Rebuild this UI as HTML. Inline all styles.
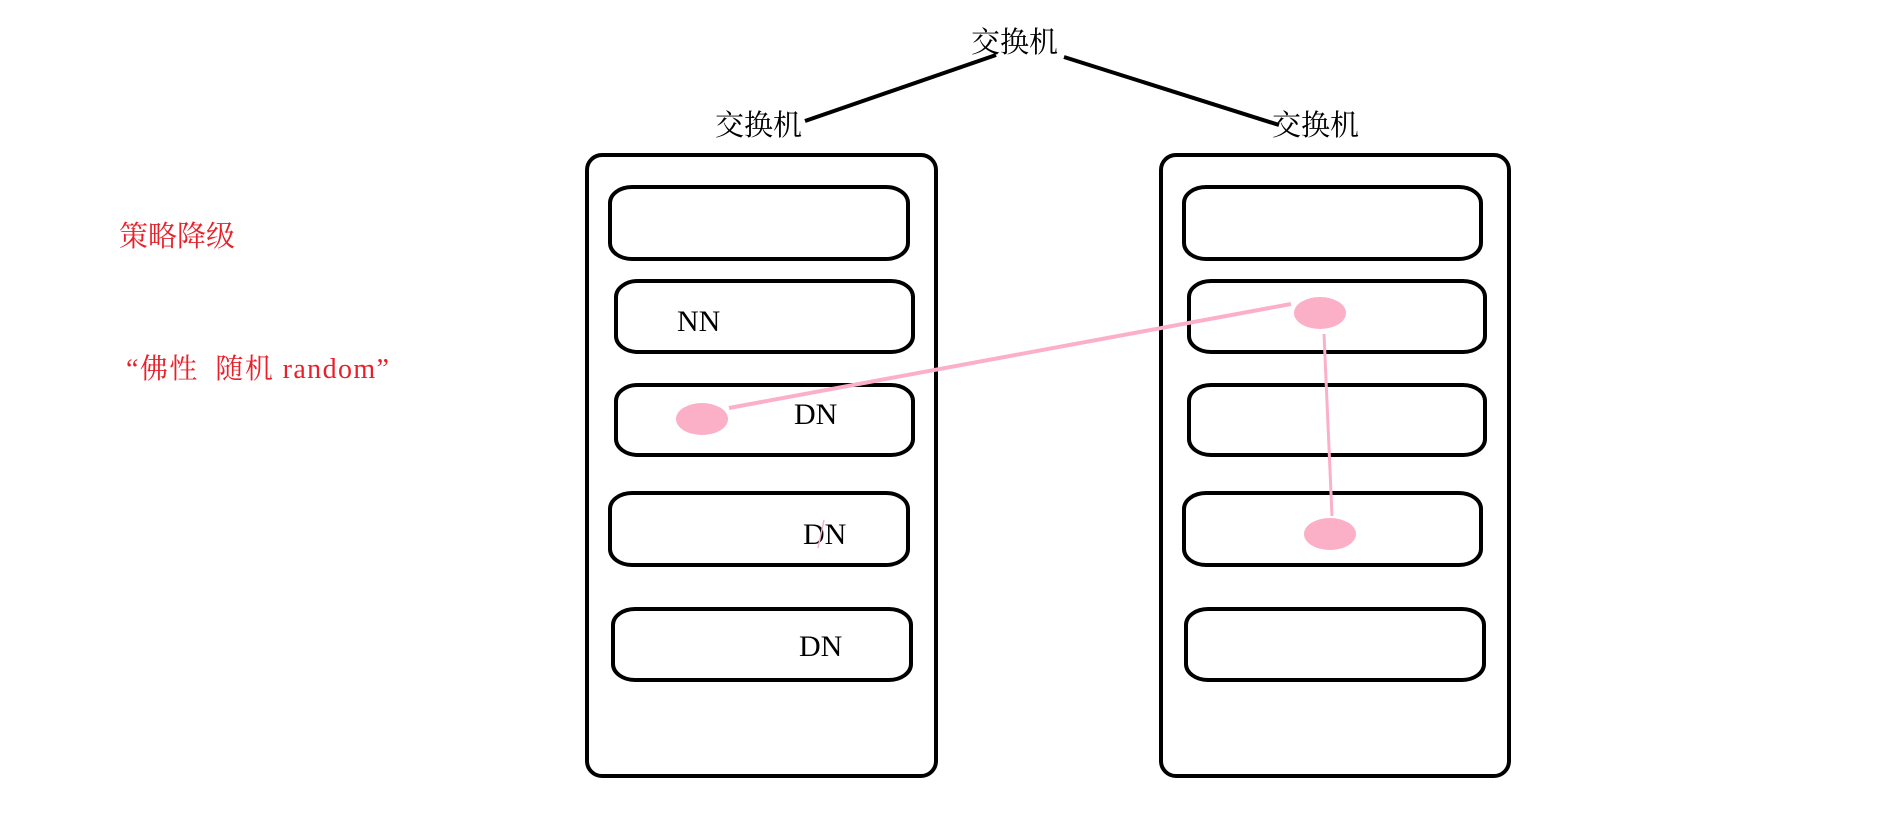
<!DOCTYPE html>
<html><head><meta charset="utf-8"><style>
html,body{margin:0;padding:0;background:#fff;width:1904px;height:824px;overflow:hidden}
svg{display:block}
.cn{font-family:"Liberation Serif","Noto Serif CJK SC",serif}
</style></head><body>
<svg width="1904" height="824" viewBox="0 0 1904 824" xmlns="http://www.w3.org/2000/svg">
<g fill="none" stroke="#000" stroke-width="4">
<line x1="805" y1="121" x2="996" y2="55"/>
<line x1="1064" y1="57" x2="1279" y2="125"/>
<rect x="587" y="155" width="349" height="621" rx="15"/>
<rect x="1161" y="155" width="348" height="621" rx="15"/>
<rect x="610" y="187" width="298" height="72" rx="22" ry="16"/>
<rect x="616" y="281" width="297" height="71" rx="22" ry="16"/>
<rect x="616" y="385" width="297" height="70" rx="22" ry="16"/>
<rect x="610" y="493" width="298" height="72" rx="22" ry="16"/>
<rect x="613" y="609" width="298" height="71" rx="22" ry="16"/>
<rect x="1184" y="187" width="297" height="72" rx="22" ry="16"/>
<rect x="1189" y="281" width="296" height="71" rx="22" ry="16"/>
<rect x="1189" y="385" width="296" height="70" rx="22" ry="16"/>
<rect x="1184" y="493" width="297" height="72" rx="22" ry="16"/>
<rect x="1186" y="609" width="298" height="71" rx="22" ry="16"/>
</g>
<g class="cn" font-size="29" fill="#000">
<text x="971" y="52">交换机</text>
<text x="715" y="135">交换机</text>
<text x="1272" y="135">交换机</text>
</g>
<g class="cn" font-size="30" fill="#000">
<text x="677" y="331">NN</text>
<text x="794" y="424">DN</text>
<text x="803" y="544">DN</text>
<text x="799" y="656">DN</text>
</g>
<g class="cn" fill="#e8202a">
<text x="119" y="246" font-size="29">策略降级</text>
<text x="126" y="378" font-size="28" letter-spacing="1.4">“佛性&#160;&#160;随机 random”</text>
</g>
<g stroke="#fbb0c8" fill="none">
<line x1="729" y1="408" x2="1291" y2="304" stroke-width="4"/>
<line x1="1324" y1="334" x2="1332" y2="516" stroke-width="3"/>
<line x1="818" y1="548" x2="824" y2="520" stroke-width="1.5"/>
</g>
<g fill="#fbb0c8">
<ellipse cx="702" cy="419" rx="26" ry="16"/>
<ellipse cx="1320" cy="313" rx="26" ry="16"/>
<ellipse cx="1330" cy="534" rx="26" ry="16"/>
</g>
</svg>
</body></html>
